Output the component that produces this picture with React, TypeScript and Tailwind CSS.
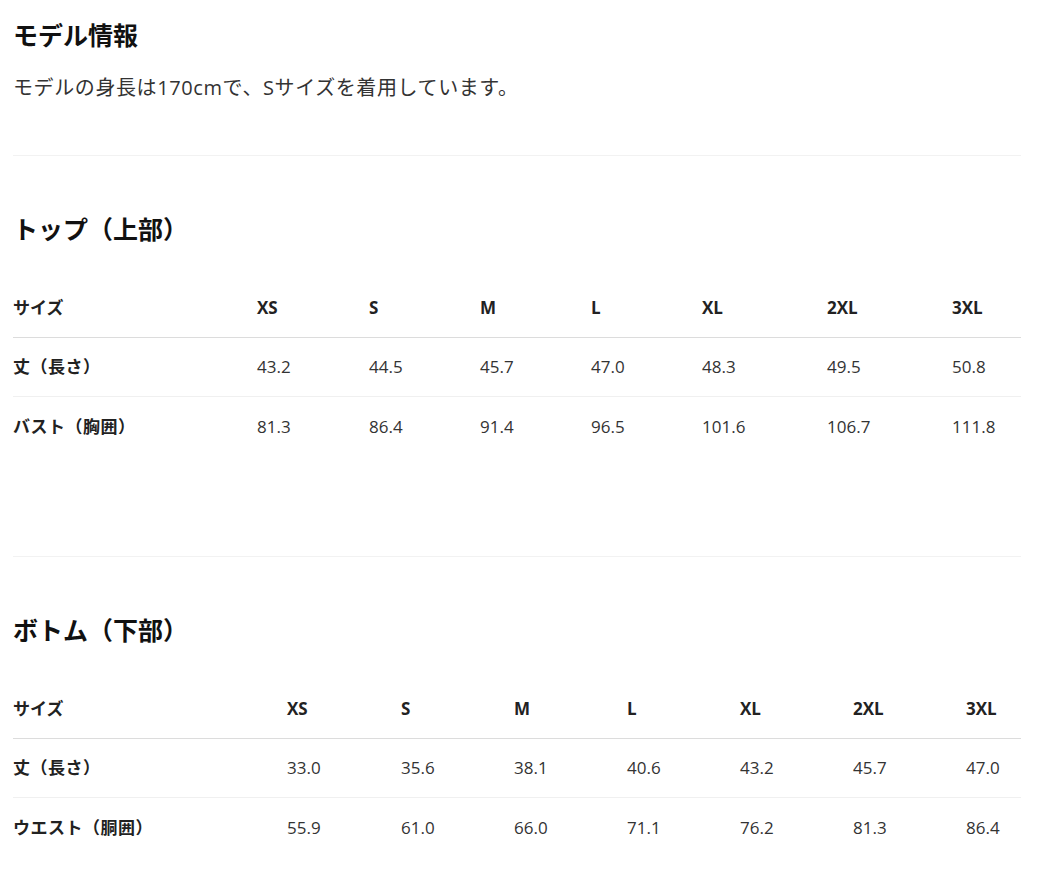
const FONT = "font-['Open_Sans','Noto_Sans_CJK_JP',sans-serif]";

type SizeTable = {
  cols: string;
  sizes: string[];
  rows: { label: string; values: string[] }[];
};

const tops: SizeTable = {
  cols: "grid-cols-[244px_112px_111px_111px_111px_125px_125px_1fr]",
  sizes: ["XS", "S", "M", "L", "XL", "2XL", "3XL"],
  rows: [
    { label: "丈（長さ）", values: ["43.2", "44.5", "45.7", "47.0", "48.3", "49.5", "50.8"] },
    { label: "バスト（胸囲）", values: ["81.3", "86.4", "91.4", "96.5", "101.6", "106.7", "111.8"] },
  ],
};

const bottoms: SizeTable = {
  cols: "grid-cols-[274px_114px_113px_113px_113px_113px_113px_1fr]",
  sizes: ["XS", "S", "M", "L", "XL", "2XL", "3XL"],
  rows: [
    { label: "丈（長さ）", values: ["33.0", "35.6", "38.1", "40.6", "43.2", "45.7", "47.0"] },
    { label: "ウエスト（胴囲）", values: ["55.9", "61.0", "66.0", "71.1", "76.2", "81.3", "86.4"] },
  ],
};

function Table({ data }: { data: SizeTable }) {
  return (
    <div className="mt-8 text-[17px]">
      <div className={`grid ${data.cols} h-[59px] items-center border-b border-[#dcdcdc] font-bold text-[#222]`}>
        <div>サイズ</div>
        {data.sizes.map((s) => (
          <div key={s}>{s}</div>
        ))}
      </div>
      {data.rows.map((row, i) => (
        <div
          key={row.label}
          className={`grid ${data.cols} h-[59px] items-center ${i < data.rows.length - 1 ? "border-b border-[#f0f0f0]" : ""}`}
        >
          <div className="font-bold tracking-[0.5px] text-[#222]">{row.label}</div>
          {row.values.map((v, j) => (
            <div key={j} className="text-[#333]">
              {v}
            </div>
          ))}
        </div>
      ))}
    </div>
  );
}

export default function App() {
  return (
    <div className={`${FONT} bg-white min-h-screen`}>
      <div className="ml-[13px] w-[1008px] pt-[17px] pb-10">
        <h2 className="text-[25px] leading-[36px] font-bold text-[#111]">モデル情報</h2>
        <p className="mt-5 text-[20px] leading-[30px] tracking-[0.6px] text-[#333]">
          モデルの身長は170cmで、Sサイズを着用しています。
        </p>

        <div className="mt-[52px] border-t border-[#f2f2f2]" />

        <h2 className="mt-[55px] text-[25px] leading-[36px] font-bold text-[#111]">トップ（上部）</h2>
        <Table data={tops} />

        <div className="mt-[100px] border-t border-[#f2f2f2]" />

        <h2 className="mt-[55px] text-[25px] leading-[36px] font-bold text-[#111]">ボトム（下部）</h2>
        <Table data={bottoms} />
      </div>
    </div>
  );
}
